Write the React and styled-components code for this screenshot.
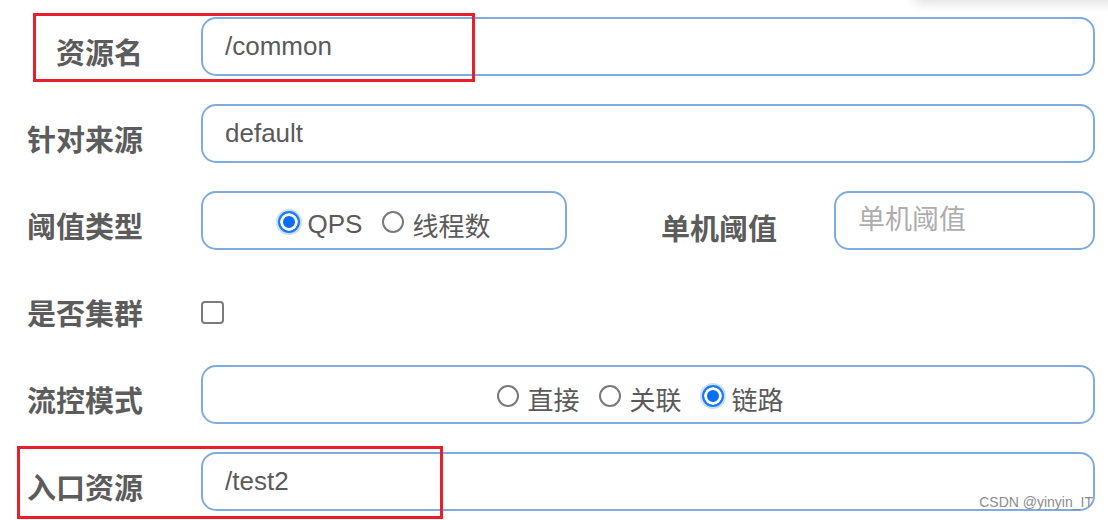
import React from 'react';
import styled, { createGlobalStyle } from 'styled-components';

const GlobalStyle = createGlobalStyle`
  html, body {
    margin: 0;
    padding: 0;
    background: #fff;
  }
  body {
    font-family: "Liberation Sans", "Noto Sans CJK SC", sans-serif;
    overflow: hidden;
  }
`;

const Page = styled.div`
  position: relative;
  width: 1108px;
  height: 520px;
  overflow: hidden;
  background: #fff;
`;

// a dropdown card sitting just above the visible area, only its shadow shows
const CardShadow = styled.div`
  position: absolute;
  top: -60px;
  left: 912px;
  right: -20px;
  height: 60px;
  border-radius: 10px;
  background: #fff;
  box-shadow: 0 3px 12px rgba(0, 0, 0, 0.13);
`;

const Form = styled.div`
  display: grid;
  grid-template-columns: 143px 1fr;
  grid-auto-rows: 59px;
  column-gap: 58px;
  row-gap: 28px;
  padding: 17px 13px 0 0;
`;

const Label = styled.div`
  display: flex;
  align-items: center;
  justify-content: flex-end;
  padding-top: 8px;
  font-family: "Noto Sans CJK SC", sans-serif;
  font-size: 29px;
  font-weight: 700;
  color: #5c5c5c;
  white-space: nowrap;
`;

const Input = styled.input`
  box-sizing: border-box;
  width: ${(p) => p.$width || '100%'};
  height: 59px;
  padding: 0 22px 1px;
  border: 2px solid #7eace0;
  border-radius: 15px;
  outline: none;
  background: #fff;
  font-family: "Liberation Sans", "Noto Sans CJK SC", sans-serif;
  font-size: 26px;
  color: #5a5a5a;

  &::placeholder {
    font-family: "Noto Sans CJK SC", sans-serif;
    font-size: 27px;
    color: #adadad;
  }
`;

const Split = styled.div`
  display: flex;
  align-items: center;
`;

const RadioBox = styled.div`
  box-sizing: border-box;
  display: flex;
  align-items: center;
  justify-content: center;
  gap: 20px;
  width: ${(p) => p.$width || '100%'};
  height: 59px;
  padding-top: 7px;
  padding-right: ${(p) => p.$shift || 0}px;
  border: 2px solid #7eace0;
  border-radius: 15px;
`;

const RadioItem = styled.label`
  display: flex;
  align-items: center;
  gap: 8px;
  font-family: "Liberation Sans", "Noto Sans CJK SC", sans-serif;
  font-size: 26px;
  color: #5a5a5a;
`;

const RadioDot = styled.span`
  box-sizing: border-box;
  width: 22px;
  height: 22px;
  margin-top: -5px;
  border-radius: 50%;
  border: 2px solid ${(p) => (p.$checked ? '#1a7cf5' : '#7a7a7a')};
  background: ${(p) => (p.$checked ? '#0a6ef5' : '#fff')};
  box-shadow: ${(p) =>
    p.$checked ? 'inset 0 0 0 3px #fff, 0 0 0 2px rgba(100, 160, 240, 0.35)' : 'none'};
`;

const SideLabel = styled(Label)`
  flex: 1;
  margin-right: 57px;
  padding-top: 12px;
`;

const CheckCell = styled.div`
  display: flex;
  align-items: center;
  padding-top: 10px;
`;

const CheckBox = styled.span`
  box-sizing: border-box;
  width: 23px;
  height: 23px;
  border: 2px solid #7a7a7a;
  border-radius: 4px;
  background: #fff;
`;

const Highlight = styled.div`
  position: absolute;
  box-sizing: border-box;
  top: ${(p) => p.$top}px;
  left: ${(p) => p.$left}px;
  width: ${(p) => p.$w}px;
  height: ${(p) => p.$h}px;
  border: 3px solid #e81f2a;
  pointer-events: none;
`;

const Watermark = styled.div`
  position: absolute;
  right: 15px;
  bottom: 10px;
  font-family: "Liberation Sans", sans-serif;
  font-size: 14px;
  color: #8c8c8c;
`;

function Radio({ checked, children }) {
  return (
    <RadioItem>
      <RadioDot $checked={checked} />
      {children}
    </RadioItem>
  );
}

function App() {
  return (
    <Page>
      <GlobalStyle />
      <CardShadow />
      <Form>
        <Label>资源名</Label>
        <Input readOnly defaultValue="/common" />

        <Label>针对来源</Label>
        <Input readOnly defaultValue="default" />

        <Label>阈值类型</Label>
        <Split>
          <RadioBox $width="366px">
            <Radio checked>QPS</Radio>
            <Radio>线程数</Radio>
          </RadioBox>
          <SideLabel>单机阈值</SideLabel>
          <Input readOnly $width="261px" placeholder="单机阈值" />
        </Split>

        <Label>是否集群</Label>
        <CheckCell>
          <CheckBox />
        </CheckCell>

        <Label>流控模式</Label>
        <RadioBox $shift={15}>
          <Radio>直接</Radio>
          <Radio>关联</Radio>
          <Radio checked>链路</Radio>
        </RadioBox>

        <Label>入口资源</Label>
        <Input readOnly defaultValue="/test2" />
      </Form>

      <Highlight $top={13} $left={33} $w={442} $h={69} />
      <Highlight $top={446} $left={17} $w={426} $h={73} />
      <Watermark>CSDN @yinyin_IT</Watermark>
    </Page>
  );
}

export default App;
